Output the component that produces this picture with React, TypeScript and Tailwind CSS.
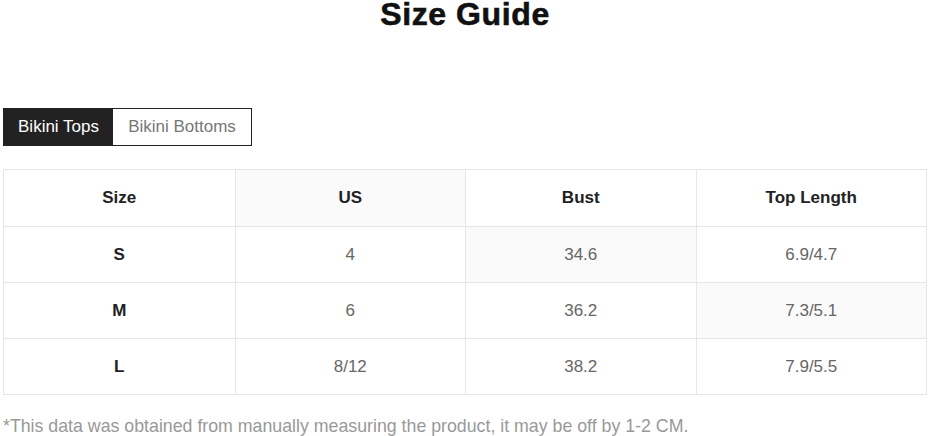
import React from "react";

const rows = [
  { size: "S", us: "4", bust: "34.6", top: "6.9/4.7" },
  { size: "M", us: "6", bust: "36.2", top: "7.3/5.1" },
  { size: "L", us: "8/12", bust: "38.2", top: "7.9/5.5" },
];

export default function App() {
  const shade = (r: number, c: number) =>
    (r === -1 && c === 1) || (r === 0 && c === 2) || (r === 1 && c === 3);
  return (
    <div
      className="w-[930px] h-[436px] bg-white overflow-hidden px-[3px]"
      style={{ fontFamily: '"Liberation Sans", Arial, sans-serif' }}
    >
      <h1 className="-mt-[4px] text-center text-[32px] leading-[36px] font-bold text-[#111] tracking-[0.6px] [-webkit-text-stroke:0.6px_#111]">
        Size Guide
      </h1>
      <div className="mt-[76px] flex w-fit border border-[#222]">
        <div className="w-[109px] h-[36px] flex items-center justify-center bg-[#222] text-white text-[17px]">
          Bikini Tops
        </div>
        <div className="w-[138px] h-[36px] flex items-center justify-center bg-white text-[#777] text-[17px]">
          Bikini Bottoms
        </div>
      </div>
      <div className="mt-[23px] w-[924px] border border-[#e6e6e6]">
        <div className="grid grid-cols-4 h-[56px]">
          {["Size", "US", "Bust", "Top Length"].map((h, c) => (
            <div
              key={h}
              className={`flex items-center justify-center text-[17px] font-bold text-[#222] ${
                c > 0 ? "border-l border-[#e6e6e6]" : ""
              } ${shade(-1, c) ? "bg-[#fafafa]" : ""}`}
            >
              {h}
            </div>
          ))}
        </div>
        {rows.map((row, r) => (
          <div key={row.size} className="grid grid-cols-4 h-[56px] border-t border-[#e6e6e6]">
            {[row.size, row.us, row.bust, row.top].map((v, c) => (
              <div
                key={c}
                className={`flex items-center justify-center text-[17px] ${
                  c === 0 ? "font-bold text-[#222]" : "text-[#666]"
                } ${c > 0 ? "border-l border-[#e6e6e6]" : ""} ${
                  shade(r, c) ? "bg-[#fafafa]" : ""
                }`}
              >
                {v}
              </div>
            ))}
          </div>
        ))}
      </div>
      <p className="mt-[20px] text-[17.75px] text-[#999] leading-[22px]">
        *This data was obtained from manually measuring the product, it may be off by 1-2 CM.
      </p>
    </div>
  );
}
